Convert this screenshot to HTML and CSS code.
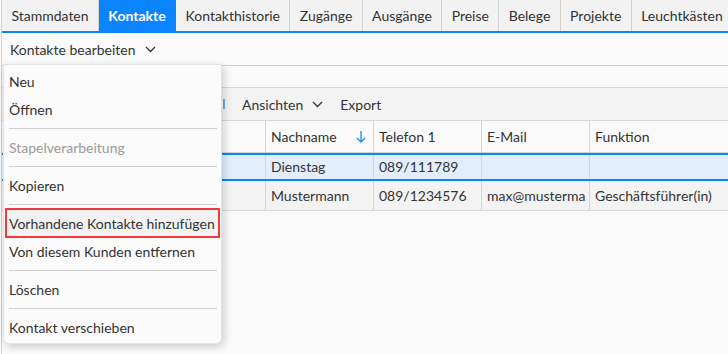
FILE: index.html
```html
<!DOCTYPE html>
<html lang="de">
<head>
  <meta charset="UTF-8">
  <title>Kontakte</title>
  <link rel="stylesheet" href="styles.css">
</head>
<body>
  <div class="page">
    <nav class="tabs">
      <div class="tab">Stammdaten</div>
      <div class="tab active">Kontakte</div>
      <div class="tab">Kontakthistorie</div>
      <div class="tab">Zugänge</div>
      <div class="tab">Ausgänge</div>
      <div class="tab">Preise</div>
      <div class="tab">Belege</div>
      <div class="tab">Projekte</div>
      <div class="tab">Leuchtkästen</div>
    </nav>

    <div class="action-bar">
      <span class="dropdown">Kontakte bearbeiten
        <svg class="chev" width="11" height="7" viewBox="0 0 11 7"><polyline points="1,1 5.5,5.5 10,1"/></svg>
      </span>
    </div>

    <div class="spacer"></div>

    <div class="grid-toolbar">
      <span class="tool-icon"></span>
      <span class="dropdown">Ansichten
        <svg class="chev" width="11" height="7" viewBox="0 0 11 7"><polyline points="1,1 5.5,5.5 10,1"/></svg>
      </span>
      <span class="tool">Export</span>
    </div>

    <div class="grid">
      <div class="row head">
        <div class="cell lead"></div>
        <div class="cell sortable">Nachname
          <svg class="sort" width="10" height="13" viewBox="0 0 10 13"><path d="M5 1v11M1 8l4 4 4-4"/></svg>
        </div>
        <div class="cell">Telefon 1</div>
        <div class="cell">E-Mail</div>
        <div class="cell">Funktion</div>
      </div>
      <div class="row selected">
        <div class="cell lead"></div>
        <div class="cell">Dienstag</div>
        <div class="cell">089/111789</div>
        <div class="cell"></div>
        <div class="cell"></div>
      </div>
      <div class="row">
        <div class="cell lead"></div>
        <div class="cell">Mustermann</div>
        <div class="cell">089/1234576</div>
        <div class="cell">max@musterma</div>
        <div class="cell">Geschäftsführer(in)</div>
      </div>
    </div>

    <ul class="menu">
      <li class="item">Neu</li>
      <li class="item">Öffnen</li>
      <li class="sep"></li>
      <li class="item disabled">Stapelverarbeitung</li>
      <li class="sep"></li>
      <li class="item">Kopieren</li>
      <li class="sep"></li>
      <li class="item marked">Vorhandene Kontakte hinzufügen</li>
      <li class="item">Von diesem Kunden entfernen</li>
      <li class="sep"></li>
      <li class="item">Löschen</li>
      <li class="sep"></li>
      <li class="item">Kontakt verschieben</li>
    </ul>
  </div>
</body>
</html>
```

FILE: styles.css
```css
* {
  box-sizing: border-box;
  margin: 0;
  padding: 0;
}

body {
  font-family: Lato, "Noto Sans", sans-serif;
  font-size: 14px;
  color: #333;
  background: #fafafa;
  height: 354px;
  overflow: hidden;
}

.page {
  position: relative;
  margin-left: 1px;
  border-left: 1px solid #d2d2d2;
  height: 354px;
}

/* tabs */
.tabs {
  display: flex;
  height: 33px;
  border-bottom: 2px solid #0b84ff;
}

.tab {
  display: flex;
  align-items: center;
  padding: 0 9.4px 1px;
  background: #f2f2f2;
  border-right: 1px solid #d2d2d2;
  white-space: nowrap;
}

.tab.active {
  background: #0b84ff;
  color: #fff;
  font-weight: 700;
  border-right-color: #0b84ff;
}

/* bars */
.action-bar {
  height: 33px;
  display: flex;
  align-items: center;
  padding-left: 8px;
  border-bottom: 1px solid #cfcfcf;
}

.dropdown {
  display: inline-flex;
  align-items: center;
  gap: 9px;
}

.chev {
  fill: none;
  stroke: #333;
  stroke-width: 1.3;
}

.spacer {
  height: 22px;
  border-bottom: 1px solid #d6d6d6;
}

.grid-toolbar {
  height: 33px;
  display: flex;
  align-items: center;
  gap: 17px;
  padding-left: 221px;
  background: #f3f3f3;
  border-bottom: 1px solid #d6d6d6;
}

.tool-icon {
  width: 2px;
  height: 10px;
  background: #6ab0f0;
}

/* table */
.grid {
  display: flex;
  flex-direction: column;
}

.row {
  display: grid;
  grid-template-columns: 264px 108px 108px 108px 1fr;
  height: 30px;
  background: #f3f3f3;
  border-bottom: 1px solid #d6d6d6;
}

.row.head {
  height: 32px;
  background: #fafafa;
}

.row.selected {
  height: 28px;
  background: #e2eefb;
  border-top: 2px solid #0b84ff;
  border-bottom: 2px solid #0b84ff;
  padding-bottom: 1px;
}

.cell {
  display: flex;
  align-items: center;
  padding-left: 5px;
  border-right: 1px solid #d6d6d6;
  white-space: nowrap;
  overflow: hidden;
}

.cell:last-child {
  border-right: none;
}

.sortable {
  justify-content: space-between;
  padding-right: 7px;
}

.sort {
  fill: none;
  stroke: #2b8ff0;
  stroke-width: 1.4;
}

/* context menu */
.menu {
  position: absolute;
  top: 64px;
  left: 1px;
  width: 219px;
  list-style: none;
  padding: 2px 0 2px;
  background: #fbfbfb;
  border: 1px solid #e2e2e2;
  border-radius: 0 0 6px 6px;
  box-shadow: 2px 3px 8px rgba(0, 0, 0, 0.18);
}

.item {
  height: 28px;
  display: flex;
  align-items: center;
  padding-left: 5px;
  white-space: nowrap;
}

.item.disabled {
  color: #9a9a9a;
}

.item.marked {
  background: #f2f2f2;
  outline: 2px solid #f0393c;
  outline-offset: -1px;
  margin: 0 2px;
  padding-left: 3px;
}

.sep {
  height: 10px;
  margin: 0 4px 0 5px;
  position: relative;
}

.sep::after {
  content: "";
  position: absolute;
  left: 0;
  right: 0;
  top: 5px;
  border-top: 1px solid #cfcfcf;
}
```
